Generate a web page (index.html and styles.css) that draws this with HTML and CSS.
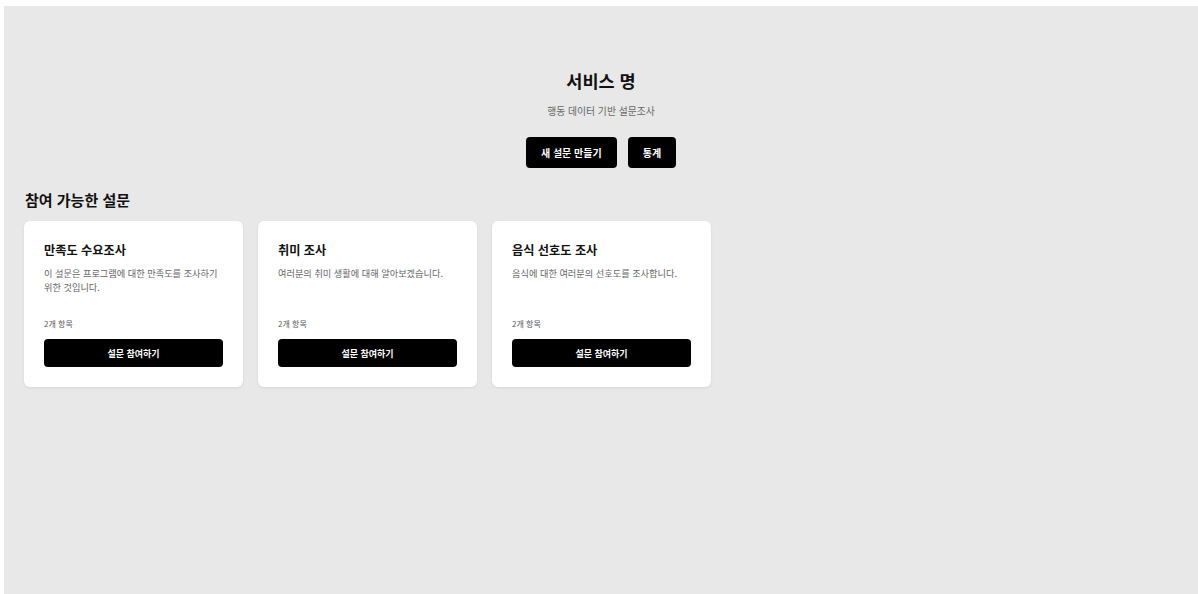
FILE: index.html
```html
<!DOCTYPE html>
<html lang="ko">
<head>
<meta charset="utf-8">
<title>서비스 명</title>
<link rel="stylesheet" href="styles.css">
</head>
<body>
<div class="page">
  <header class="hero">
    <h1 class="hero-title">서비스 명</h1>
    <p class="hero-sub">행동 데이터 기반 설문조사</p>
    <div class="hero-actions">
      <button class="btn">새 설문 만들기</button>
      <button class="btn">통계</button>
    </div>
  </header>
  <section class="surveys">
    <h2 class="section-title">참여 가능한 설문</h2>
    <div class="card-grid">
      <article class="card">
        <h3 class="card-title">만족도 수요조사</h3>
        <p class="card-desc">이 설문은 프로그램에 대한 만족도를 조사하기 위한 것입니다.</p>
        <p class="card-count">2개 항목</p>
        <button class="card-btn">설문 참여하기</button>
      </article>
      <article class="card">
        <h3 class="card-title">취미 조사</h3>
        <p class="card-desc">여러분의 취미 생활에 대해 알아보겠습니다.</p>
        <p class="card-count">2개 항목</p>
        <button class="card-btn">설문 참여하기</button>
      </article>
      <article class="card">
        <h3 class="card-title">음식 선호도 조사</h3>
        <p class="card-desc">음식에 대한 여러분의 선호도를 조사합니다.</p>
        <p class="card-count">2개 항목</p>
        <button class="card-btn">설문 참여하기</button>
      </article>
    </div>
  </section>
</div>
</body>
</html>
```

FILE: styles.css
```css
* { box-sizing: border-box; }

html, body {
  margin: 0;
  padding: 0;
  background: #ffffff;
}

body {
  font-family: "Noto Sans CJK KR", "Noto Sans", sans-serif;
  color: #111;
}

.page {
  margin: 6px 0 0 4px;
  min-height: 588px;
  background: #e8e8e8;
  padding: 20px;
}

.hero {
  text-align: center;
  padding-top: 44px;
}

.hero-title {
  margin: 0;
  font-size: 17.5px;
  line-height: 22px;
  font-weight: 700;
  color: #111;
}

.hero-sub {
  margin: 12px 0 0;
  font-size: 9.8px;
  line-height: 14px;
  color: #666;
}

.hero-actions {
  margin-top: 19px;
  display: flex;
  justify-content: center;
  gap: 11px;
}

.btn {
  height: 31px;
  padding: 0 15px;
  border: none;
  border-radius: 4px;
  background: #000;
  color: #fff;
  font-family: inherit;
  font-size: 10px;
  font-weight: 700;
  cursor: pointer;
}

.surveys {
  margin-top: 22px;
}

.section-title {
  margin: 0 0 11px;
  padding-left: 1px;
  font-size: 15px;
  line-height: 20px;
  font-weight: 700;
  color: #111;
}

.card-grid {
  display: grid;
  grid-template-columns: repeat(3, 219px);
  gap: 15px;
}

.card {
  display: flex;
  flex-direction: column;
  background: #fff;
  border-radius: 6px;
  box-shadow: 0 1px 3px rgba(0, 0, 0, 0.08);
  padding: 20px;
  min-height: 166px;
}

.card-title {
  margin: 0;
  font-size: 12.2px;
  line-height: 18px;
  font-weight: 700;
  color: #111;
}

.card-desc {
  margin: 8px 0 0;
  font-size: 9.2px;
  line-height: 13.5px;
  color: #666;
}

.card-count {
  margin: auto 0 0;
  padding-top: 12px;
  font-size: 8px;
  line-height: 11px;
  color: #555;
}

.card-btn {
  margin-top: 10px;
  height: 28px;
  width: 100%;
  border: none;
  border-radius: 4px;
  background: #000;
  color: #fff;
  font-family: inherit;
  font-size: 9px;
  font-weight: 700;
  cursor: pointer;
}
```
